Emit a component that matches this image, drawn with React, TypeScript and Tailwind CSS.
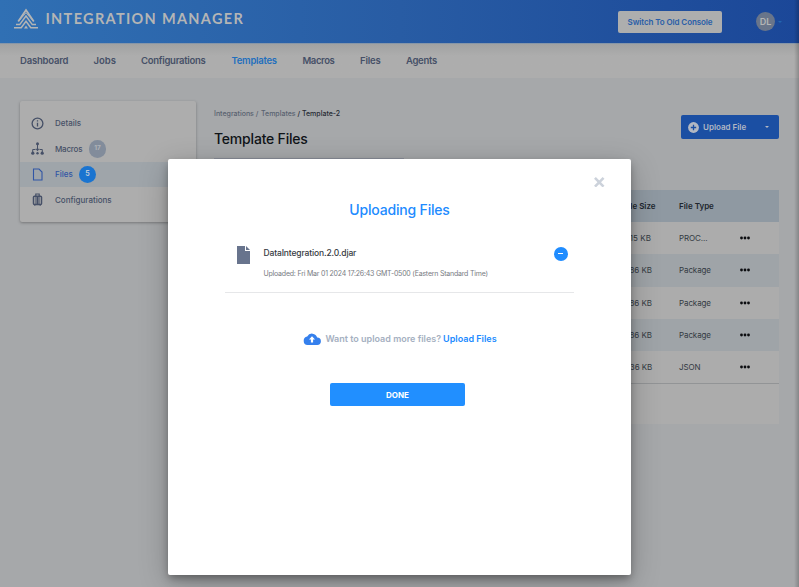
import React from "react";

const nav = [
  { label: "Dashboard", cls: "w-[73.5px] tracking-[-0.2px]" },
  { label: "Jobs", cls: "w-[47.5px]" },
  { label: "Configurations", cls: "w-[90.5px] tracking-[-0.28px]" },
  { label: "Templates", cls: "w-[71px] tracking-[-0.27px] text-[#1f6fbd]" },
  { label: "Macros", cls: "w-[57.5px] tracking-[-0.4px]" },
  { label: "Files", cls: "w-[46px] tracking-[-0.15px]" },
  { label: "Agents", cls: "w-[50px] tracking-[-0.3px]" },
];

const rows = [
  { size: "7.15 KB", type: "PROC...", shift: "pl-[2px] tracking-[0.05px]" },
  { size: "2.86 KB", type: "Package", shift: "tracking-[-0.05px]" },
  { size: "2.86 KB", type: "Package", shift: "tracking-[-0.05px]" },
  { size: "2.86 KB", type: "Package", shift: "tracking-[-0.05px]" },
  { size: "1.36 KB", type: "JSON", shift: "pl-[2px] tracking-[-0.05px]" },
];

function Logo() {
  return (
    <svg className="ml-[14px] h-[21px] w-[24px]" viewBox="0 0 24 21" fill="none" stroke="#b4b5b5" strokeWidth="1.5">
      <path d="M0 19.7H7.2L12 13.2L16.8 19.7H24" />
      <path d="M2 16.6H5.7L12 8L18.3 16.6H22" />
      <path d="M4.2 13.5L12 2L19.8 13.5" strokeWidth="1.8" />
      <path d="M5.2 12.7L12 4.7L18.8 12.7" strokeWidth=".9" />
      <path d="M12 17.4L14 20.5H10Z" fill="#b4b5b5" stroke="none" />
    </svg>
  );
}

function Header() {
  return (
    <header className="flex h-[43px] items-center bg-linear-to-r from-[#3070b4] via-[#285ca4] to-[#1b4798]">
      <div className="flex h-full w-[618px] items-start pt-[8px]">
        <Logo />
        <span className="ml-[7.5px] mt-[1px] font-['Lato',sans-serif] text-[14.5px] leading-[20px] font-bold tracking-[1.32px] whitespace-nowrap text-[#b4b5b5]">
          INTEGRATION MANAGER
        </span>
      </div>
      <button className="h-[22px] w-[104px] rounded-[2px] bg-[#adaeae] text-[8px] font-semibold tracking-[-0.1px] whitespace-nowrap text-[#285da8]">
        Switch To Old Console
      </button>
      <span className="ml-[34px] flex h-[19px] w-[19px] items-center justify-center rounded-full bg-[#69758a] text-[9px] font-semibold text-[#b4b5b5]">
        DL
      </span>
      <span className="ml-[3px] h-0 w-0 border-x-[2px] border-t-[2px] border-x-transparent border-t-[#2366b0]" />
    </header>
  );
}

function Sidebar() {
  const row = "flex h-[25.5px] items-center pl-[11px]";
  const label = "ml-[11px] text-[8px] font-medium";
  return (
    <aside className="ml-[20px] h-[121px] w-[176px] rounded-[2px] bg-[#adadad] pt-[9.5px] text-[#465067] shadow-[0_1px_3px_rgba(0,0,0,0.3)]">
      <div className={row}>
        <svg className="h-[13px] w-[13px]" viewBox="0 0 13 13" fill="none" stroke="currentColor" strokeWidth="1.3">
          <circle cx="6.5" cy="6.5" r="5.4" />
          <path d="M6.5 5.7V9.4M6.5 3.3V4.6" strokeWidth="1.3" />
        </svg>
        <span className={label}>Details</span>
      </div>
      <div className={row}>
        <svg className="h-[13px] w-[13px]" viewBox="0 0 13 13" fill="none" stroke="currentColor">
          <path d="M6.5 2V8M1.7 10.5V7.5H4.5M8.5 7.5H11.3V10.5" />
          <path d="M4.5 6.7H8.5L6.5 9.2Z" fill="currentColor" stroke="none" />
          <g fill="currentColor" stroke="none">
            <circle cx="6.5" cy="1.8" r="1.5" />
            <circle cx="1.8" cy="11.2" r="1.6" />
            <circle cx="6.5" cy="11.2" r="1.2" />
            <circle cx="11.2" cy="11.2" r="1.6" />
          </g>
        </svg>
        <span className={label + " tracking-[-0.2px]"}>Macros</span>
        <span className="ml-[6.5px] flex h-[17.5px] w-[17.5px] items-center justify-center rounded-full bg-[#828c9b] text-[6.5px] font-bold text-[#b0b3b8]">17</span>
      </div>
      <div className={row + " bg-[#9fa5aa] text-[#3156a5]"}>
        <svg className="h-[13px] w-[13px]" viewBox="0 0 13 13" fill="none" stroke="currentColor" strokeWidth="1.1">
          <path d="M2.5 1H8L11 4V12H2.5Z" />
        </svg>
        <span className={label}>Files</span>
        <span className="ml-[6px] flex h-[17.5px] w-[17.5px] items-center justify-center rounded-full bg-[#1a74d0] text-[7px] font-bold text-[#b9c9da]">5</span>
      </div>
      <div className={row}>
        <svg className="h-[13px] w-[13px]" viewBox="0 0 13 13" fill="none" stroke="currentColor">
          <path d="M4.8 3V1H8.2V3" strokeWidth="1.2" />
          <rect x="2.5" y="3.2" width="8" height="8.2" rx="1" strokeWidth="1.5" />
          <path d="M5 4V11M6.5 4V11M8 4V11M3.8 11V12.7M9.2 11V12.7" strokeWidth="1.1" />
        </svg>
        <span className={label}>Configurations</span>
      </div>
    </aside>
  );
}

function Table() {
  const cols = "grid grid-cols-[408.5px_56.5px_61px_1fr] items-center";
  return (
    <div className="mt-[31px] w-[565px] bg-[#acacac] text-[8px] text-[#333a42]">
      <div className={cols + " h-[32px] bg-[#8f99a2] font-semibold text-[#20262e]"}>
        <span className="pl-[10px]">File Name</span>
        <span className="pl-[1px]">File Size</span>
        <span>File Type</span>
      </div>
      {rows.map((r, i) => (
        <div key={i} className={cols + " h-[32.3px] " + (i % 2 ? "bg-[#9fa4a8]" : "")}>
          <span />
          <span className={r.shift}>{r.size}</span>
          <span className="tracking-[-0.1px]">{r.type}</span>
          <svg className="h-[4px] w-[10px]" viewBox="0 0 10 4" fill="#0c0d10">
            <circle cx="1.5" cy="2" r="1.4" />
            <circle cx="5" cy="2" r="1.4" />
            <circle cx="8.5" cy="2" r="1.4" />
          </svg>
        </div>
      ))}
      <div className="h-[40.5px] border-t border-[#929496]" />
    </div>
  );
}

function Modal() {
  return (
    <section className="absolute top-[158.5px] left-[168px] flex h-[416.5px] w-[463px] flex-col items-center rounded-[2px] bg-white shadow-[0_4px_8px_-1px_rgba(0,0,0,0.35),0_8px_30px_rgba(0,0,0,0.24)]">
      <div className="flex h-[41px] w-full justify-end pt-[18px] pr-[26.5px]">
        <svg className="h-[10.5px] w-[10.5px]" viewBox="0 0 10 10" stroke="#ccd2db" strokeWidth="2.5">
          <path d="M.9 .9L9.1 9.1M9.1 .9L.9 9.1" />
        </svg>
      </div>
      <h2 className="text-[14px] leading-[20px] font-medium tracking-[-0.18px] text-[#218bff]">Uploading Files</h2>
      <div className="mt-[25px] flex h-[48.5px] w-[349px] border-b border-[#e6e7e9] pl-[12px]">
        <svg className="mt-[1.5px] h-[18px] w-[13px]" viewBox="0 0 13 18" fill="#68748d">
          <path d="M0 0H8V5H13V18H0Z" />
          <path d="M9 0L13 4H9Z" />
        </svg>
        <div className="ml-[13.5px] flex-1 pt-[2.5px] whitespace-nowrap">
          <p className="text-[8.5px] leading-[12px] font-medium tracking-[-0.14px] text-[#363a42]">DataIntegration.2.0.djar</p>
          <p className="mt-[9.7px] text-[7px] leading-[10px] tracking-[-0.21px] text-[#777b82]">
            Uploaded: Fri Mar 01 2024 17:26:43 GMT-0500 (Eastern Standard Time)
          </p>
        </div>
        <span className="mt-[2px] mr-[6.5px] flex h-[14px] w-[14px] items-center justify-center rounded-full bg-[#1f8cff]">
          <i className="h-[1px] w-[5px] bg-white" />
        </span>
      </div>
      <div className="mt-[37.5px] flex h-[16px] items-center pl-[1px] whitespace-nowrap">
        <svg className="mt-[1px] h-[12px] w-[18px]" viewBox="0 0 18 12">
          <path d="M4.5 12A4.3 4.3 0 0 1 4.2 3.5A5.4 5.4 0 0 1 14.2 4.6A3.7 3.7 0 0 1 14.2 12Z" fill="#3580ed" />
          <path d="M9 3.3L12 6.6H10.1V9.5H7.9V6.6H6Z" fill="#fff" />
        </svg>
        <span className="ml-[4px] text-[9px] font-semibold text-[#a5b0c1]">Want to upload more files?</span>
        <span className="ml-[2px] text-[9px] font-semibold text-[#218bff]">Upload Files</span>
      </div>
      <button className="mt-[36.5px] mr-[4px] h-[23px] w-[134.5px] rounded-[2px] bg-[#218fff] text-[8px] font-bold text-white">DONE</button>
    </section>
  );
}

export default function App() {
  return (
    <div className="relative h-[587px] w-[799px] overflow-hidden bg-[#a6a8aa] font-['Inter',sans-serif]">
      <Header />
      <nav className="flex h-[35px] items-center border-t border-[#8696a8] bg-linear-to-b from-[#a1a2a2] to-[#adadad] to-35% pl-[20px] text-[9.5px] font-semibold text-[#465067]">
        {nav.map((n) => (
          <span key={n.label} className={n.cls}>{n.label}</span>
        ))}
      </nav>
      <div className="flex pt-[23px]">
        <Sidebar />
        <main className="ml-[18px] w-[565px]">
          <div className="mt-[7px] text-[7px] leading-[11px] font-medium whitespace-nowrap text-[#596270]">
            Integrations / <span className="ml-[0.8px]">Templates</span> <span className="text-[#252a32]">/ Template-2</span>
          </div>
          <div className="flex h-[40px] justify-between">
            <h1 className="mt-[10px] text-[14px] leading-[20px] font-medium tracking-[-0.2px] text-[#101418]">Template Files</h1>
            <button className="-mt-[4px] flex h-[24px] w-[98px] items-center rounded-[2px] bg-[#1b4fa3] text-[8px] font-semibold whitespace-nowrap text-[#b2b8c3]">
              <svg className="ml-[7px] h-[11px] w-[11px]" viewBox="0 0 11 11">
                <circle cx="5.5" cy="5.5" r="5.4" fill="#b2b8c3" />
                <path d="M5.5 2.8V8.2M2.8 5.5H8.2" stroke="#1b4fa3" strokeWidth="1.3" />
              </svg>
              <span className="ml-[4px]">Upload File</span>
              <span className="ml-auto mr-[10px] h-0 w-0 border-x-[2px] border-t-[2px] border-x-transparent border-t-[#b2b8c3]" />
            </button>
          </div>
          <div className="-mb-[1px] h-[1px] w-[190px] translate-y-[-1px] bg-[#8b8f9b]" />
          <Table />
        </main>
      </div>
      <div className="absolute top-0 right-0 h-full w-[5px] bg-linear-to-r from-transparent to-black/20" />
      <Modal />
    </div>
  );
}
